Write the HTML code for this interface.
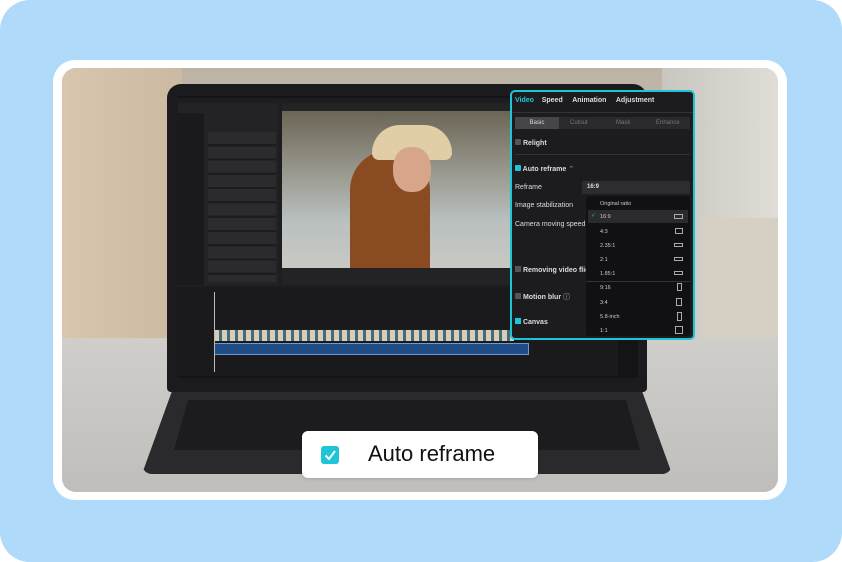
<!DOCTYPE html><html><head><style>
*{margin:0;padding:0;box-sizing:border-box}
body{width:842px;height:562px;background:#fff;font-family:"Liberation Sans",sans-serif;overflow:hidden;position:relative}
.a{position:absolute}
.bg{left:0;top:0;width:842px;height:562px;background:#b0dafa;border-radius:30px}
.frame{left:53px;top:60px;width:734px;height:440px;background:#fff;border-radius:22px}
.photo{left:62px;top:68px;width:716px;height:424px;border-radius:14px;overflow:hidden;background:linear-gradient(180deg,#bdb3a5 0%,#c9c2b8 35%,#d8d4cd 60%,#c9c7c2 100%)}
.t{color:#ddd;font-size:7px}
</style></head><body>
<div class="a bg"></div>
<div class="a frame"></div>
<div class="a photo">
 <div class="a" style="left:0;top:0;width:120px;height:424px;background:linear-gradient(90deg,#d9c6ae,#cbb9a2)"></div>
 <div class="a" style="left:600px;top:0;width:116px;height:424px;background:linear-gradient(90deg,#c8c6c0,#e0ddd6)"></div>
 <div class="a" style="left:640px;top:150px;width:76px;height:150px;background:#d6cfc4"></div>
 <div class="a" style="left:0;top:270px;width:716px;height:154px;background:linear-gradient(180deg,#cfcecb,#bfbebb)"></div>
 <!-- laptop base -->
 <div class="a" style="left:80px;top:318px;width:530px;height:88px;background:#2a2a2c;border-radius:0 0 10px 10px;clip-path:polygon(6% 0,94% 0,100% 100%,0 100%)"></div>
 <div class="a" style="left:112px;top:332px;width:466px;height:50px;background:#1c1c1e;clip-path:polygon(3% 0,97% 0,100% 100%,0 100%)"></div>
 <!-- screen -->
 <div class="a" style="left:105px;top:16px;width:480px;height:308px;background:#1b1b1d;border-radius:14px 14px 4px 4px"></div>
 <div class="a" style="left:116px;top:28px;width:460px;height:282px;background:#141416"></div>
</div>
<!-- app UI -->
<div class="a" style="left:178px;top:98px;width:440px;height:278px;background:#1e1e20"></div>
<div class="a" style="left:178px;top:103px;width:100px;height:182px;background:#232325"></div>
<div class="a" style="left:178px;top:113px;width:26px;height:172px;background:#1a1a1c"></div>
<div class="a" style="left:208px;top:132px;width:68px;height:150px;background:repeating-linear-gradient(180deg,#2b2b2e 0 12px,#1c1c1e 12px 14.3px)"></div>
<div class="a" style="left:282px;top:103px;width:230px;height:182px;background:#232325"></div>
<div class="a" style="left:282px;top:111px;width:230px;height:157px;background:linear-gradient(180deg,#6b6556 0%,#9a9a8f 40%,#b9c0c0 70%,#c8c9c3 100%)"></div>
<div class="a" style="left:350px;top:150px;width:80px;height:118px;background:#8a4a22;border-radius:40px 40px 0 0"></div>
<div class="a" style="left:372px;top:125px;width:80px;height:35px;background:#e1cda6;border-radius:40px 40px 10px 10px"></div>
<div class="a" style="left:393px;top:147px;width:38px;height:45px;background:#d6a58a;border-radius:45%"></div>
<div class="a" style="left:178px;top:287px;width:440px;height:89px;background:#1a1a1c"></div>
<div class="a" style="left:214px;top:330px;width:300px;height:11px;background:repeating-linear-gradient(90deg,#d9cdb5 0 5px,#3d6d7a 5px 8px)"></div>
<div class="a" style="left:214px;top:343px;width:315px;height:12px;background:#1f4b86;border:1px solid #6a9ad0"></div>
<div class="a" style="left:214px;top:292px;width:1px;height:80px;background:#bbb"></div>
<!-- right panel -->
<div class="a" style="left:510px;top:90px;width:185px;height:250px;background:#1c1c1f;border:2px solid #1ec5d6;border-radius:5px;color:#ddd">
 <div class="a" style="left:3px;top:5px;font-size:7px;font-weight:bold;width:180px"><span style="color:#22c8d8">Video</span>&nbsp;&nbsp;&nbsp; Speed &nbsp;&nbsp;&nbsp; Animation &nbsp;&nbsp;&nbsp; Adjustment</div>
 <div class="a" style="left:0;top:20px;width:181px;height:1px;background:#333"></div>
 <div class="a" style="left:3px;top:25px;width:175px;height:12px;background:#2a2a2d;font-size:6px;color:#777">
  <span class="a" style="left:0;top:0;width:44px;height:12px;background:#45454a;color:#ddd;text-align:center;line-height:12px">Basic</span>
  <span class="a" style="left:55px;line-height:12px">Cutout</span><span class="a" style="left:101px;line-height:12px">Mask</span><span class="a" style="left:141px;line-height:12px">Enhance</span></div>
 <div class="a t" style="left:3px;top:47px;font-weight:bold"><span style="display:inline-block;width:6px;height:6px;background:#555;border-radius:1px"></span> Relight</div>
 <div class="a" style="left:3px;top:62px;width:175px;height:1px;background:#333"></div>
 <div class="a t" style="left:3px;top:73px;font-weight:bold"><span style="display:inline-block;width:6px;height:6px;background:#1ec5d6;border-radius:1px"></span> Auto reframe <span style="color:#777">⌃</span></div>
 <div class="a t" style="left:3px;top:92px">Reframe</div>
 <div class="a" style="left:70px;top:89px;width:108px;height:13px;background:#2d2d30;font-size:6px;font-weight:bold;line-height:13px;padding-left:5px">16:9</div>
 <div class="a t" style="left:3px;top:110px">Image stabilization</div>
 <div class="a t" style="left:3px;top:129px">Camera moving speed</div>
 <div class="a t" style="left:3px;top:174px;font-weight:bold"><span style="display:inline-block;width:6px;height:6px;background:#555"></span> Removing video flick</div>
 <div class="a t" style="left:3px;top:200px;font-weight:bold"><span style="display:inline-block;width:6px;height:6px;background:#555"></span> Motion blur <span style="color:#777">ⓘ</span></div>
 <div class="a t" style="left:3px;top:226px;font-weight:bold"><span style="display:inline-block;width:6px;height:6px;background:#1ec5d6"></span> Canvas</div>
 <div class="a" style="left:74px;top:104px;width:104px;height:140px;background:#111113;border-radius:3px;font-size:5.5px;color:#ccc">
  <div class="a" style="left:14px;top:5px">Original ratio</div>
  <div class="a" style="left:2px;top:14px;width:100px;height:13px;background:#2b2b2e"></div>
  <div class="a" style="left:5px;top:17px;color:#1ec5d6">✓</div>
  <div class="a" style="left:14px;top:18px">16:9</div><div class="a" style="left:88px;top:18px;width:9px;height:5px;border:1px solid #aaa"></div>
  <div class="a" style="left:14px;top:33px">4:3</div><div class="a" style="left:89px;top:32px;width:8px;height:6px;border:1px solid #aaa"></div>
  <div class="a" style="left:14px;top:47px">2.35:1</div><div class="a" style="left:88px;top:47px;width:9px;height:4px;border:1px solid #aaa"></div>
  <div class="a" style="left:14px;top:61px">2:1</div><div class="a" style="left:88px;top:61px;width:9px;height:4px;border:1px solid #aaa"></div>
  <div class="a" style="left:14px;top:75px">1.85:1</div><div class="a" style="left:88px;top:75px;width:9px;height:4px;border:1px solid #aaa"></div>
  <div class="a" style="left:0;top:85px;width:104px;height:1px;background:#333"></div>
  <div class="a" style="left:14px;top:89px">9:16</div><div class="a" style="left:91px;top:87px;width:5px;height:8px;border:1px solid #aaa"></div>
  <div class="a" style="left:14px;top:104px">3:4</div><div class="a" style="left:90px;top:102px;width:6px;height:8px;border:1px solid #aaa"></div>
  <div class="a" style="left:14px;top:118px">5.8-inch</div><div class="a" style="left:91px;top:116px;width:5px;height:9px;border:1px solid #aaa"></div>
  <div class="a" style="left:14px;top:132px">1:1</div><div class="a" style="left:89px;top:130px;width:8px;height:8px;border:1px solid #aaa"></div>
 </div>
</div>
<!-- badge -->
<div class="a" style="left:302px;top:431px;width:236px;height:47px;background:#fff;border-radius:6px;box-shadow:0 1px 3px rgba(0,0,0,.15)"></div>
<div class="a" style="left:321px;top:446px;width:18px;height:18px;background:#1ec5d6;border-radius:3px"></div>
<svg class="a" style="left:321px;top:446px" width="18" height="18"><path d="M4.5 9.5 L8 13 L14 5" stroke="#fff" stroke-width="2" fill="none"/></svg>
<div class="a" style="left:368px;top:441px;font-size:22px;color:#111;line-height:26px">Auto reframe</div>
</body></html>
